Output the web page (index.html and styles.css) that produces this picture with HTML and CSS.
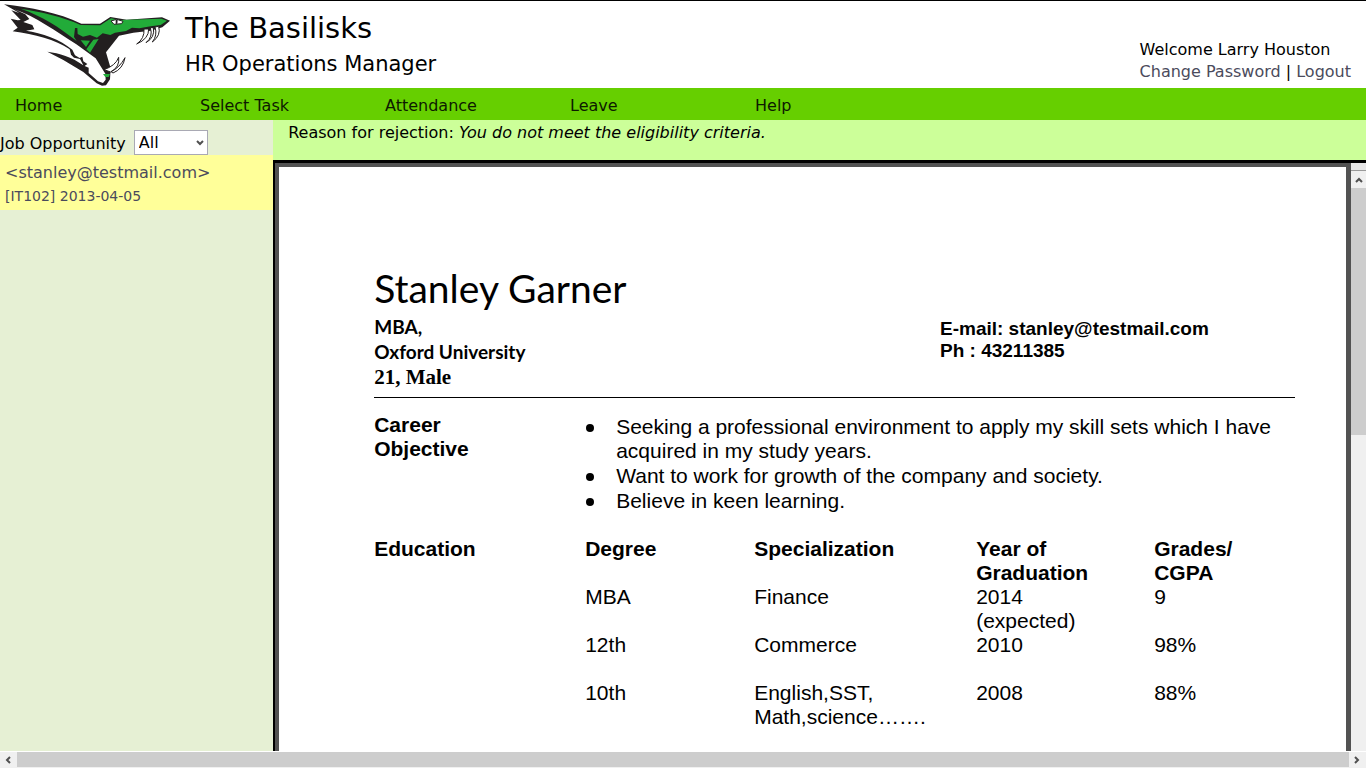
FILE: index.html
```html
<!DOCTYPE html>
<html lang="en">
<head>
<meta charset="utf-8">
<meta name="viewport" content="width=device-width, initial-scale=1">
<title>The Basilisks - HR Operations Manager</title>
<link rel="stylesheet" href="styles.css">
</head>
<body>
<header class="header">
  <svg class="logo" viewBox="0 3 540 261" role="img" aria-label="Basilisk head">
    <path fill="#231f20" d="M12 13 C90 22 175 38 244 71 L300 71 L331 51 L380 59 L486 52 L510 62 L487 82 L452 92 L400 98 L357 107 L318 157 L332 205 L330 238 L318 256 L306 257 L290 250 L250 216 L190 180 L142 155 C178 160 215 170 250 196 L240 177 L222 173 L213 164 L209 148 C165 119 105 103 38 94 L53 83 L32 56 L53 61 L62 60 L34 31 L58 39 Z"/>
    <path fill="#fff" d="M43 28 C105 48 170 96 229 133 L287 175 L316 221 L317 239 L309 249 L294 244 L266 219 L266 203 L254 198 L262 192 L250 184 L247 170 L239 174 L225 166 L217 149 C182 119 124 98 78 92 L103 88 L97 75 L70 66 L88 57 L76 43 Z"/>
    <path fill="#22ab39" d="M62 26 C122 35 188 50 242 75 L301 76 L333 55 L360 60 L484 56 L501 62 L482 75 L452 79 L418 85 L396 83 L378 93 L345 98 L331 105 L308 100 L291 113 L270 105 L249 110 L233 102 L232 84 L225 84 L222 111 L230 123 C180 83 124 47 62 26 Z"/>
    <path fill="#22ab39" d="M242 121 L270 122 L258 141 Z M280 119 L296 117 L270 158 L259 148 Z M309 222 L330 222 L326 231 L316 231 Z"/>
    <path fill="#fff" stroke="#231f20" stroke-width="3" d="M333 63 L350 58 L369 64 L365 71 L342 73 Z M432 87 Q434 116 410 132 Q447 116 446 87 Z M451 83 Q460 111 438 128 Q466 112 460 83 Z M465 81 Q473 106 457 126 Q484 106 476 79 Z M312 209 Q347 197 356 172 Q360 201 332 216 Z M333 215 Q359 203 375 173 Q369 207 339 219 Z"/>
    <path fill="#231f20" d="M347 59 L353 59 L352 71 L347 72 Z"/>
  </svg>
  <div class="brand">
    <h1 class="brand-name">The Basilisks</h1>
    <p class="brand-role">HR Operations Manager</p>
  </div>
  <div class="account">
    <div>Welcome Larry Houston</div>
    <div><a href="#">Change Password</a> | <a href="#">Logout</a></div>
  </div>
</header>
<nav class="nav">
  <a href="#">Home</a><a href="#">Select Task</a><a href="#">Attendance</a><a href="#">Leave</a><a href="#">Help</a>
</nav>
<div class="main">
  <aside class="sidebar">
    <div class="filter">
      <label for="job">Job Opportunity</label>
      <span class="select-wrap">
        <select id="job"><option>All</option></select>
        <svg class="select-arrow" viewBox="0 0 8 6" aria-hidden="true"><path d="M1 1 L4 4 L7 1"/></svg>
      </span>
    </div>
    <a class="applicant" href="#">
      <span class="applicant-mail">&lt;stanley@testmail.com&gt;</span>
      <span class="applicant-info">[IT102] 2013-04-05</span>
    </a>
  </aside>
  <section class="content">
    <p class="notice">Reason for rejection: <em>You do not meet the eligibility criteria.</em></p>
    <div class="viewer">
      <article class="paper">
        <h2 class="name">Stanley Garner</h2>
        <div class="intro">
          <div class="degree">MBA,<br>Oxford University<br><span class="age">21, Male</span></div>
          <div class="contact">E-mail: stanley@testmail.com<br>Ph : 43211385</div>
        </div>
        <div class="row career">
          <h3>Career<br>Objective</h3>
          <ul class="goals">
            <li>Seeking a professional environment to apply my skill sets which I have acquired in my study years.</li>
            <li>Want to work for growth of the company and society.</li>
            <li>Believe in keen learning.</li>
          </ul>
        </div>
        <div class="row education">
          <h3>Education</h3>
          <table class="grades">
            <colgroup><col class="c-degree"><col class="c-spec"><col class="c-year"><col></colgroup>
            <thead>
              <tr><th scope="col">Degree</th><th scope="col">Specialization</th><th scope="col">Year of<br>Graduation</th><th scope="col">Grades/<br>CGPA</th></tr>
            </thead>
            <tbody>
              <tr><td>MBA</td><td>Finance</td><td>2014<br>(expected)</td><td>9</td></tr>
              <tr><td>12th</td><td>Commerce</td><td>2010</td><td>98%</td></tr>
              <tr><td>10th</td><td>English,SST,<br>Math,science…….</td><td>2008</td><td>88%</td></tr>
            </tbody>
          </table>
        </div>
      </article>
      <div class="vbar" aria-hidden="true">
        <span class="vbar-top"></span>
        <svg class="vbar-arrow" viewBox="0 0 15 17"><path d="M5 11 L8 8 L11 11"/></svg>
        <span class="vbar-thumb"></span>
      </div>
    </div>
  </section>
</div>
<div class="hbar" aria-hidden="true">
  <svg viewBox="0 0 17 16"><path d="M10 5 L7 8 L10 11"/></svg>
  <span class="hbar-thumb"></span>
  <svg viewBox="0 0 17 16"><path d="M6 5 L9 8 L6 11"/></svg>
</div>
</body>
</html>
```

FILE: styles.css
```css
* {
  box-sizing: border-box;
}

body {
  margin: 0;
  height: 100vh;
  overflow: hidden;
  display: flex;
  flex-direction: column;
  font: 16px/22px "DejaVu Sans", Verdana, sans-serif;
  color: #000;
  background: #fff;
}

h1, h2, h3, p, ul {
  margin: 0;
  padding: 0;
  font-weight: normal;
}

a {
  color: #4b4b5c;
  text-decoration: none;
}

.header {
  display: flex;
  flex: none;
  height: 88px;
  border-top: 1px solid #000;
}

.logo {
  width: 180px;
  height: 87px;
  margin-right: 5px;
}

.brand {
  padding-top: 9px;
}

.brand-name {
  font-size: 29px;
  line-height: 36px;
}

.brand-role {
  font-size: 21px;
  line-height: 36px;
}

.account {
  margin-left: auto;
  padding: 38px 15px 0 0;
}

.nav {
  display: flex;
  flex: none;
  padding-left: 15px;
  line-height: 36px;
  height: 32px;
  background: #66cf00;
}

.nav a {
  width: 185px;
  color: #0d1a00;
}

.main {
  display: flex;
  flex: 1;
  min-height: 0;
  margin-bottom: 1px;
}

.sidebar {
  width: 20%;
  flex: none;
  background: #e6f0d4;
}

.filter {
  display: flex;
  gap: 8px;
  padding-top: 10px;
  line-height: 28px;
  height: 35px;
  white-space: nowrap;
}

.select-wrap {
  position: relative;
}

.filter select {
  display: block;
  appearance: none;
  width: 74px;
  height: 25px;
  padding: 1px 4px 0;
  border: 1px solid #a9a9b4;
  border-radius: 0;
  background: #fff;
  color: #000;
  font: inherit;
  line-height: 22px;
}

.select-arrow {
  position: absolute;
  right: 4px;
  top: 10px;
  width: 8px;
  height: 6px;
  pointer-events: none;
}

.select-arrow path,
.vbar path,
.hbar path {
  fill: none;
  stroke: #505050;
  stroke-width: 2;
}

.applicant {
  display: block;
  height: 55px;
  padding: 7px 5px;
  background: #ffff99;
}

.applicant span {
  display: block;
}

.applicant-info {
  font-size: 14px;
  line-height: 24px;
}

.content {
  display: flex;
  flex: 1;
  flex-direction: column;
  min-width: 0;
}

.notice {
  flex: none;
  height: 40px;
  padding: 2px 15px;
  background: #ccff99;
}

.viewer {
  display: flex;
  flex: 1;
  min-height: 0;
  border-top: 3px solid #000;
  border-left: 2px solid #000;
}

.paper {
  flex: 1;
  overflow: hidden;
  padding: 97px 51px 0 95px;
  border: 4px solid #525252;
  border-right-width: 5px;
  border-bottom: 0;
  font: 21px/24px "Liberation Sans", Arial, sans-serif;
}

.name {
  font: 39px/48px Lato, Carlito, Calibri, sans-serif;
}

.intro {
  display: flex;
  justify-content: space-between;
  padding: 2px 0 7px;
  border-bottom: 1px solid #000;
  font-weight: bold;
}

.degree {
  font: bold 19px/25px Lato, Carlito, Calibri, sans-serif;
}

.age {
  font: bold 21px/25px "Liberation Serif", "Times New Roman", serif;
}

.contact {
  width: 355px;
  padding-top: 4px;
  font-size: 19px;
  line-height: 22px;
}

.row {
  display: flex;
}

.row h3 {
  width: 211px;
  flex: none;
  font-size: 21px;
  line-height: 24px;
  font-weight: bold;
}

.career {
  padding-top: 15px;
}

.goals {
  flex: 1;
  padding-top: 2px;
  list-style: none;
}

.goals li {
  position: relative;
  margin-bottom: 1px;
  padding-left: 31px;
}

.goals li::before {
  content: "";
  position: absolute;
  left: 1px;
  top: 9px;
  width: 8px;
  height: 8px;
  border-radius: 50%;
  background: #000;
}

.education {
  padding-top: 23px;
}

.grades {
  flex: 1;
  table-layout: fixed;
  border-collapse: collapse;
}

.grades th,
.grades td {
  height: 48px;
  padding: 0;
  text-align: left;
  vertical-align: top;
}

.c-degree {
  width: 169px;
}

.c-spec {
  width: 222px;
}

.c-year {
  width: 178px;
}

.vbar {
  display: flex;
  flex: none;
  flex-direction: column;
  width: 15px;
  background: #f0f0f0;
}

.vbar-top {
  height: 8px;
  border-bottom: 1px solid #9a9a9a;
  background: #e6e6e6;
}

.vbar-arrow {
  width: 15px;
  height: 17px;
}

.vbar-thumb {
  height: 42%;
  background: #cdcdcd;
}

.hbar {
  display: flex;
  flex: none;
  height: 16px;
  background: #f0f0f0;
}

.hbar svg {
  width: 17px;
  height: 16px;
}

.hbar-thumb {
  flex: 1;
  height: 15px;
  background: #cdcdcd;
}
```
